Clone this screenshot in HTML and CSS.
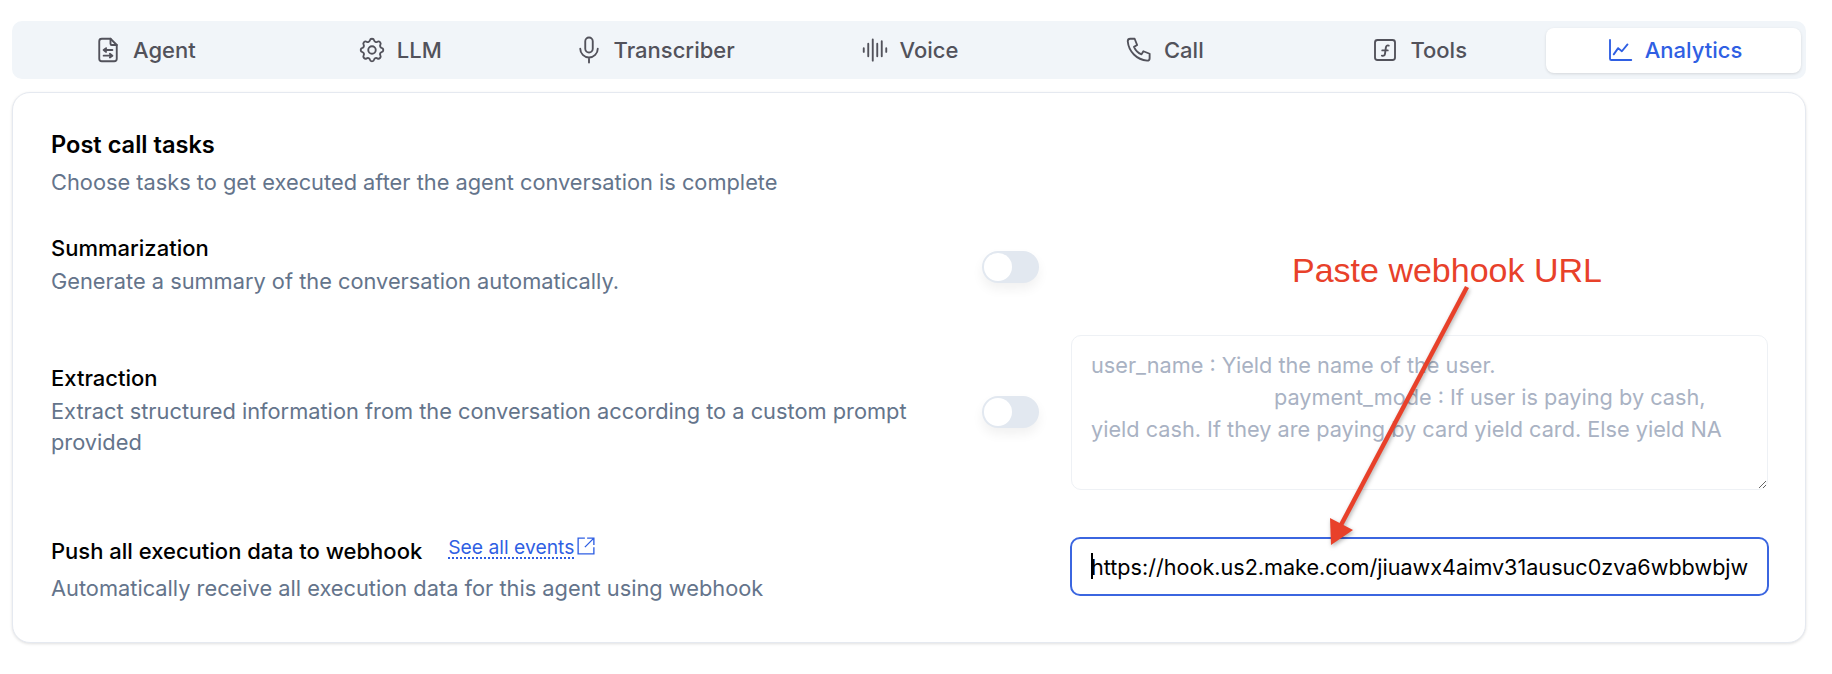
FILE: index.html
```html
<!DOCTYPE html>
<html lang="en">
<head>
    <meta charset="UTF-8">
    <meta name="viewport" content="width=device-width, initial-scale=1.0">
    <title>Agent analytics</title>
    <link rel="stylesheet" href="styles.css">
</head>
<body>
    <div class="page">
        <nav class="tabs">
            <a class="tab">
                <svg class="icon" viewBox="0 0 24 24"><path d="M14 3v4a1 1 0 0 0 1 1h4"/><path d="M17 21H7a2 2 0 0 1-2-2V5a2 2 0 0 1 2-2h7l5 5v11a2 2 0 0 1-2 2z"/><path d="M8.500 12h7M10.500 10.500l-2 1.500 2 1.500M8.500 16.500h7M13.500 15l2 1.500-2 1.500"/></svg>
                Agent
            </a>
            <a class="tab">
                <svg class="icon" viewBox="0 0 24 24"><path d="M10.300 4.300c.4-1.800 3-1.800 3.400 0a1.700 1.700 0 0 0 2.600 1.100c1.500-.9 3.300.8 2.400 2.400a1.700 1.700 0 0 0 1 2.500c1.800.4 1.800 3 0 3.400a1.700 1.700 0 0 0-1 2.600c.9 1.500-.9 3.300-2.400 2.400a1.700 1.700 0 0 0-2.600 1c-.4 1.800-3 1.800-3.400 0a1.700 1.700 0 0 0-2.600-1c-1.500.9-3.300-.9-2.400-2.400a1.700 1.700 0 0 0-1-2.600c-1.800-.4-1.800-3 0-3.400a1.700 1.700 0 0 0 1-2.500c-.9-1.600.9-3.300 2.400-2.400a1.700 1.700 0 0 0 2.600-1.100z"/><circle cx="12" cy="12" r="3"/></svg>
                LLM
            </a>
            <a class="tab">
                <svg class="icon" viewBox="0 0 24 24"><path d="M9 5a3 3 0 0 1 6 0v6a3 3 0 0 1-6 0z"/><path d="M5 11a7 7 0 0 0 14 0M12 18v4"/></svg>
                Transcriber
            </a>
            <a class="tab">
                <svg class="icon" viewBox="0 0 24 24"><path d="M3 10.500v3M6.600 7v10M10.200 3.500v17M13.800 7v10M17.400 5v12M21 10.500v3"/></svg>
                Voice
            </a>
            <a class="tab">
                <svg class="icon" viewBox="0 0 24 24"><path d="M5 3h3.500l2 5-2.500 1.500a11 11 0 0 0 6 6l1.500-2.500 5 2v3.500a2 2 0 0 1-2 2A17 17 0 0 1 3 5a2 2 0 0 1 2-2"/></svg>
                Call
            </a>
            <a class="tab">
                <svg class="icon" viewBox="0 0 24 24"><rect x="4" y="4" width="16" height="16" rx="2"/><path d="M9.500 16.500c1.500.5 2.300-.2 2.500-1.500l.7-5c.2-1.400 1-2 2.300-1.500M9.800 12.300h4.400"/></svg>
                Tools
            </a>
            <a class="tab active">
                <svg class="icon" viewBox="0 0 24 24"><path d="M4 4v15a1 1 0 0 0 1 1h16"/><path d="M7 15.500l3.500-5 3 2.500 4.500-5.500"/></svg>
                Analytics
            </a>
        </nav>

        <section class="card">
            <div class="card-head">
                <h2>Post call tasks</h2>
                <p class="desc">Choose tasks to get executed after the agent conversation is complete</p>
            </div>

            <div class="row row-summary">
                <div class="row-text">
                    <h3>Summarization</h3>
                    <p class="desc">Generate a summary of the conversation automatically.</p>
                </div>
                <span class="toggle"><span class="thumb"></span></span>
                <div></div>
            </div>

            <div class="row row-extract">
                <div class="row-text">
                    <h3>Extraction</h3>
                    <p class="desc">Extract structured information from the conversation according to a custom prompt provided</p>
                </div>
                <span class="toggle"><span class="thumb"></span></span>
                <textarea class="prompt" placeholder="user_name : Yield the name of the user.&#10;                              payment_mode : If user is paying by cash, yield cash. If they are paying by card yield card. Else yield NA"></textarea>
            </div>

            <div class="row row-webhook">
                <div class="row-text">
                    <h3 class="webhook-title">
                        Push all execution data to webhook
                        <a class="events-link"><span>See all events</span>
                            <svg viewBox="1 1 16 16"><path d="M8 2H2v14h14v-6M10 2h6v6M16 2L8 10"/></svg>
                        </a>
                    </h3>
                    <p class="desc">Automatically receive all execution data for this agent using webhook</p>
                </div>
                <div></div>
                <div class="url-box">
                    <input class="url" type="text" value="https://hook.us2.make.com/jiuawx4aimv31ausuc0zva6wbbwbjw">
                    <span class="caret"></span>
                </div>
            </div>
        </section>

        <!-- annotation drawn on top of the screenshot -->
        <div class="note">Paste webhook URL</div>
        <svg class="arrow" viewBox="0 0 200 300">
            <path class="arrow-line" d="M147 7L21 245"/>
            <path class="arrow-head" d="M10 238L33 250L11 265z"/>
        </svg>
    </div>
</body>
</html>
```

FILE: styles.css
```css
* {
    box-sizing: border-box;
}

body {
    margin: 0;
    background-color: #fff;
    color: #000;
    font-family: Inter, "Noto Sans", sans-serif;
}

.page {
    position: relative;
    height: 674px;
    padding: 21px 26px 0 12px;
}

.tabs {
    display: grid;
    grid-template-columns: repeat(7, 1fr);
    height: 58px;
    padding: 7px 5px 6px;
    background-color: #f1f5f9;
    border-radius: 10px;
}

.tab {
    display: flex;
    align-items: center;
    justify-content: center;
    gap: 10px;
    padding-bottom: 2px;
    color: #52525b;
    font-size: 22px;
    font-weight: 500;
    border-radius: 8px;
}

.tab.active {
    background-color: #fff;
    color: #2f5fe3;
    box-shadow: 0 1px 3px rgba(0, 0, 0, 0.12);
}

.icon {
    width: 30px;
    height: 30px;
    fill: none;
    stroke: currentColor;
    stroke-width: 1.5;
    stroke-linecap: round;
    stroke-linejoin: round;
}

.card {
    height: 551px;
    margin-top: 13px;
    padding: 36px 35px 0 38px;
    background-color: #fff;
    border: 1px solid #e5e9f0;
    border-radius: 18px;
    box-shadow: 0 1px 3px rgba(0, 0, 0, 0.12);
}

.card-head {
    margin-bottom: 35px;
}

h2 {
    margin: 0 0 7px;
    font-size: 23.6px;
    font-weight: 600;
    line-height: 31px;
}

h3 {
    margin: 0 0 2px;
    font-size: 22px;
    font-weight: 500;
    line-height: 31px;
}

.desc {
    margin: 0;
    color: #64748b;
    font-size: 21.8px;
    line-height: 31px;
}

.row {
    display: grid;
    grid-template-columns: 900px 57px 699px;
    column-gap: 31px;
    align-items: center;
    margin-bottom: 38px;
}

.row-summary {
    align-items: start;
}

.row-summary .toggle {
    margin-top: 18px;
}

.row-extract {
    margin-bottom: 46px;
}

.row-extract .row-text {
    margin-bottom: 4px;
}

.row-extract .toggle {
    margin-bottom: 2px;
}

.row-webhook {
    align-items: start;
}

.webhook-title {
    display: flex;
    align-items: flex-start;
    gap: 26px;
    margin-bottom: 6px;
}

.events-link {
    display: flex;
    gap: 3px;
    margin-top: 1px;
    color: #2f5fe3;
    font-size: 19.3px;
    font-weight: 400;
    line-height: 20px;
}

.events-link span {
    border-bottom: 2px dotted #2f5fe3;
}

.events-link svg {
    width: 18px;
    height: 18px;
    fill: none;
    stroke: currentColor;
    stroke-width: 1.2;
}

.toggle {
    display: flex;
    align-items: center;
    width: 57px;
    height: 32px;
    padding: 2px;
    background-color: #e2e8f0;
    border-radius: 16px;
    box-shadow: 0 6px 12px rgba(0, 0, 0, 0.06);
}

.thumb {
    width: 28px;
    height: 28px;
    background-color: #fff;
    border-radius: 50%;
}

.prompt {
    display: block;
    width: 697px;
    height: 155px;
    margin-left: 1px;
    padding: 12.5px 19px;
    color: #000;
    font-family: inherit;
    font-size: 21.7px;
    line-height: 32px;
    background-color: #fff;
    border: 1px solid #eef1f5;
    border-radius: 10px;
    outline: none;
}

.prompt::placeholder {
    color: #a9b2c3;
    opacity: 1;
}

.url-box {
    position: relative;
    margin-top: 1px;
}

.url {
    display: block;
    width: 699px;
    height: 59px;
    padding: 0 19px;
    color: #000;
    font-family: inherit;
    font-size: 21.6px;
    background-color: #fff;
    border: 2px solid #3b66e0;
    border-radius: 10px;
    outline: none;
}

.caret {
    position: absolute;
    left: 21px;
    top: 16px;
    width: 2px;
    height: 26px;
    background-color: #000;
}

.note {
    position: absolute;
    left: 1292px;
    top: 250px;
    color: #e8412a;
    font-family: "Liberation Sans", Arial, sans-serif;
    font-size: 34px;
    line-height: 40px;
}

.arrow {
    position: absolute;
    left: 1320px;
    top: 280px;
    width: 200px;
    height: 300px;
    filter: drop-shadow(1px 2px 2px rgba(0, 0, 0, 0.3));
}

.arrow-line {
    fill: none;
    stroke: #e8412a;
    stroke-width: 4.5;
}

.arrow-head {
    fill: #e8412a;
}
```
